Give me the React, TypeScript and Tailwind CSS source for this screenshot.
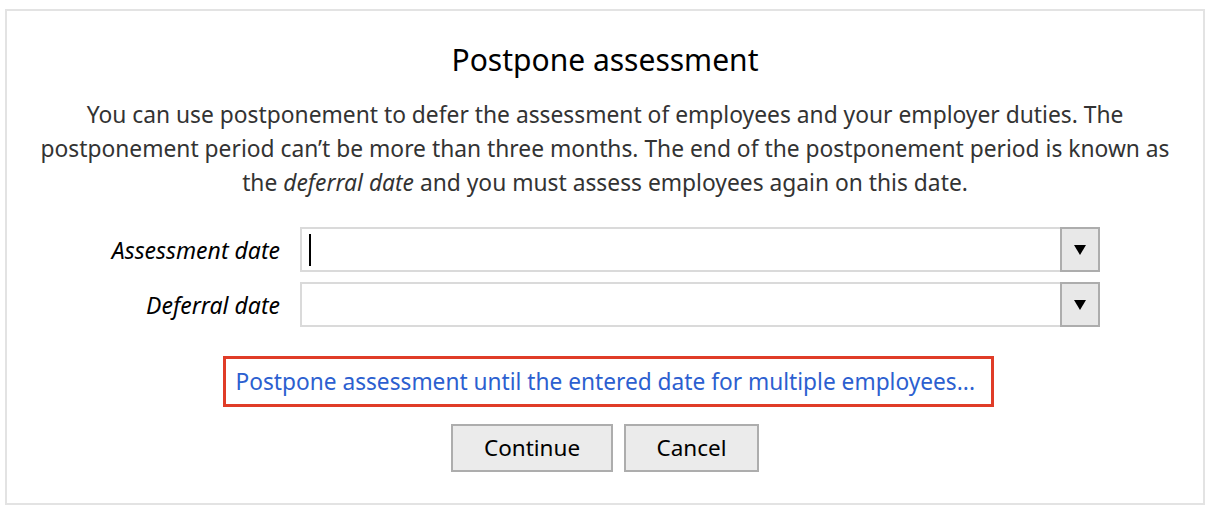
import React from "react";

function DateField({ label, cursor }: { label: string; cursor?: boolean }) {
  return (
    <div className="flex items-center">
      <div className="w-[293px] shrink-0 pr-[20px] text-right italic text-[23px] leading-[30px] text-black">{label}</div>
      <div className="flex h-[45px] w-[800px] border-2 border-[#dadada] bg-white">
        <div className="flex flex-1 items-center pl-[7px]">
          {cursor && <div className="h-[32px] w-[2px] bg-black" />}
        </div>
        <div className="-my-[2px] -mr-[2px] flex w-[40px] items-center justify-center border-2 border-[#adadad] bg-[#e8e8e8]">
          <svg width="12" height="10" viewBox="0 0 12 10">
            <polygon points="0,0 12,0 6,10" fill="#000" />
          </svg>
        </div>
      </div>
    </div>
  );
}

export default function App() {
  return (
    <div className="h-[512px] w-[1212px] bg-white pl-[5px] pt-[9px]" style={{ fontFamily: '"Noto Sans", "Open Sans", sans-serif' }}>
      <div className="flex h-[496px] w-[1200px] flex-col items-center border-2 border-[#e3e3e3] bg-white">
        <h1 className="mt-[29px] text-[30px] leading-[40px] text-black">Postpone assessment</h1>
        <p className="mt-[18px] w-[1180px] text-center text-[22.8px] leading-[34px] text-[#333]">
          You can use postponement to defer the assessment of employees and your employer duties. The
          <br />
          postponement period can’t be more than three months. The end of the postponement period is known as
          <br />
          the <em>deferral date</em> and you must assess employees again on this date.
        </p>
        <div className="mt-[27px] flex w-full flex-col gap-[10px]">
          <DateField label="Assessment date" cursor />
          <DateField label="Deferral date" />
        </div>
        <div className="ml-[6px] mt-[29px] flex h-[51px] w-[771px] items-center border-[3px] border-[#e03c28] pl-[10px]">
          <span className="whitespace-nowrap text-[22.7px] leading-[30px] text-[#2c5fd0]">Postpone assessment until the entered date for multiple employees...</span>
        </div>
        <div className="mt-[17px] flex gap-[11px]">
          <button className="h-[48px] w-[162px] border-2 border-[#adadad] bg-[#ebebeb] text-[22.5px] text-black">Continue</button>
          <button className="h-[48px] w-[135px] border-2 border-[#adadad] bg-[#ebebeb] text-[22.5px] text-black">Cancel</button>
        </div>
      </div>
    </div>
  );
}
